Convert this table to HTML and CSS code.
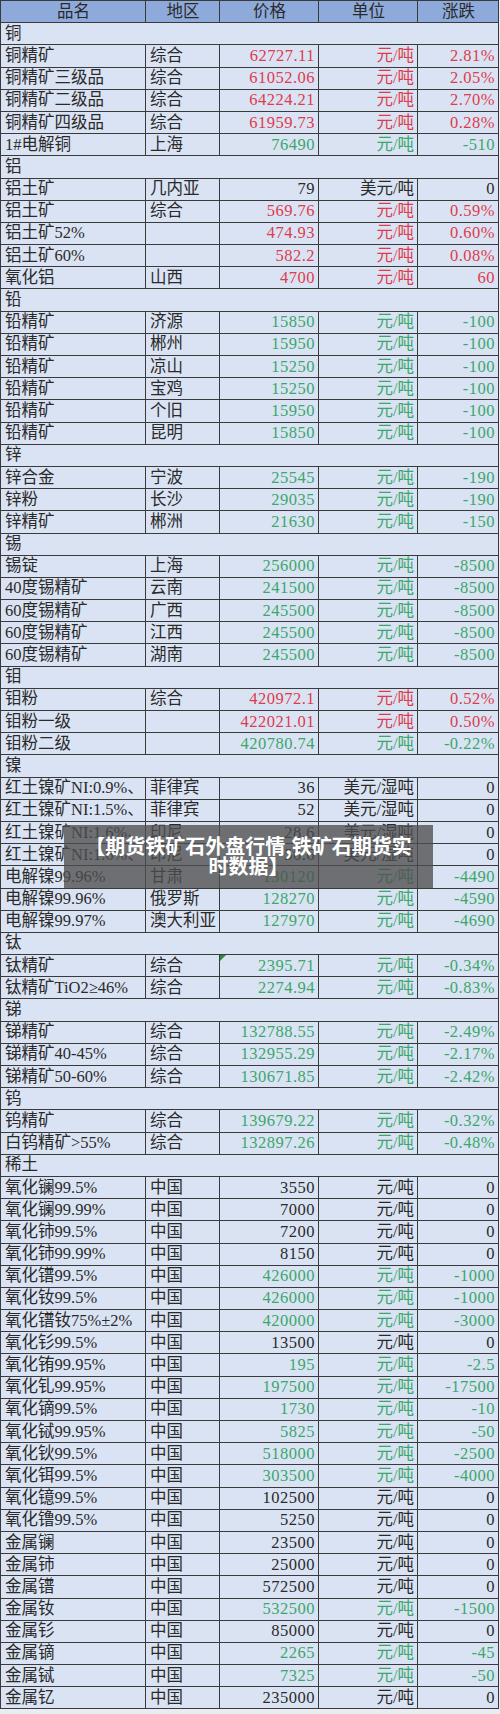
FILE: index.html
```html
<!DOCTYPE html>
<html lang="zh">
<head>
<meta charset="utf-8">
<title>期货铁矿石外盘行情</title>
<link rel="stylesheet" href="styles.css">
</head>
<body>
<div class="wrap">
<table class="sheet">
<colgroup><col class="c1"><col class="c2"><col class="c3"><col class="c4"><col class="c5"></colgroup>
<thead>
<tr><th>品名</th><th>地区</th><th>价格</th><th>单位</th><th>涨跌</th></tr>
</thead>
<tbody>
<tr class="sec"><td colspan="5">铜</td></tr>
<tr class="r"><td>铜精矿</td><td>综合</td><td>62727.11</td><td>元/吨</td><td>2.81%</td></tr>
<tr class="r"><td>铜精矿三级品</td><td>综合</td><td>61052.06</td><td>元/吨</td><td>2.05%</td></tr>
<tr class="r"><td>铜精矿二级品</td><td>综合</td><td>64224.21</td><td>元/吨</td><td>2.70%</td></tr>
<tr class="r"><td>铜精矿四级品</td><td>综合</td><td>61959.73</td><td>元/吨</td><td>0.28%</td></tr>
<tr class="g"><td>1#电解铜</td><td>上海</td><td>76490</td><td>元/吨</td><td>-510</td></tr>
<tr class="sec"><td colspan="5">铝</td></tr>
<tr><td>铝土矿</td><td>几内亚</td><td>79</td><td>美元/吨</td><td>0</td></tr>
<tr class="r"><td>铝土矿</td><td>综合</td><td>569.76</td><td>元/吨</td><td>0.59%</td></tr>
<tr class="r"><td>铝土矿52%</td><td></td><td>474.93</td><td>元/吨</td><td>0.60%</td></tr>
<tr class="r"><td>铝土矿60%</td><td></td><td>582.2</td><td>元/吨</td><td>0.08%</td></tr>
<tr class="r"><td>氧化铝</td><td>山西</td><td>4700</td><td>元/吨</td><td>60</td></tr>
<tr class="sec"><td colspan="5">铅</td></tr>
<tr class="g"><td>铅精矿</td><td>济源</td><td>15850</td><td>元/吨</td><td>-100</td></tr>
<tr class="g"><td>铅精矿</td><td>郴州</td><td>15950</td><td>元/吨</td><td>-100</td></tr>
<tr class="g"><td>铅精矿</td><td>凉山</td><td>15250</td><td>元/吨</td><td>-100</td></tr>
<tr class="g"><td>铅精矿</td><td>宝鸡</td><td>15250</td><td>元/吨</td><td>-100</td></tr>
<tr class="g"><td>铅精矿</td><td>个旧</td><td>15950</td><td>元/吨</td><td>-100</td></tr>
<tr class="g"><td>铅精矿</td><td>昆明</td><td>15850</td><td>元/吨</td><td>-100</td></tr>
<tr class="sec"><td colspan="5">锌</td></tr>
<tr class="g"><td>锌合金</td><td>宁波</td><td>25545</td><td>元/吨</td><td>-190</td></tr>
<tr class="g"><td>锌粉</td><td>长沙</td><td>29035</td><td>元/吨</td><td>-190</td></tr>
<tr class="g"><td>锌精矿</td><td>郴洲</td><td>21630</td><td>元/吨</td><td>-150</td></tr>
<tr class="sec"><td colspan="5">锡</td></tr>
<tr class="g"><td>锡锭</td><td>上海</td><td>256000</td><td>元/吨</td><td>-8500</td></tr>
<tr class="g"><td>40度锡精矿</td><td>云南</td><td>241500</td><td>元/吨</td><td>-8500</td></tr>
<tr class="g"><td>60度锡精矿</td><td>广西</td><td>245500</td><td>元/吨</td><td>-8500</td></tr>
<tr class="g"><td>60度锡精矿</td><td>江西</td><td>245500</td><td>元/吨</td><td>-8500</td></tr>
<tr class="g"><td>60度锡精矿</td><td>湖南</td><td>245500</td><td>元/吨</td><td>-8500</td></tr>
<tr class="sec"><td colspan="5">钼</td></tr>
<tr class="r"><td>钼粉</td><td>综合</td><td>420972.1</td><td>元/吨</td><td>0.52%</td></tr>
<tr class="r"><td>钼粉一级</td><td></td><td>422021.01</td><td>元/吨</td><td>0.50%</td></tr>
<tr class="g"><td>钼粉二级</td><td></td><td>420780.74</td><td>元/吨</td><td>-0.22%</td></tr>
<tr class="sec"><td colspan="5">镍</td></tr>
<tr><td>红土镍矿NI:0.9%、</td><td>菲律宾</td><td>36</td><td>美元/湿吨</td><td>0</td></tr>
<tr><td>红土镍矿NI:1.5%、</td><td>菲律宾</td><td>52</td><td>美元/湿吨</td><td>0</td></tr>
<tr><td>红土镍矿NI:1.6%、</td><td>印尼</td><td>28.6</td><td>美元/湿吨</td><td>0</td></tr>
<tr><td>红土镍矿NI:1.6%、</td><td>印尼</td><td>50.6</td><td>美元/湿吨</td><td>0</td></tr>
<tr class="g"><td>电解镍99.96%</td><td>甘肃</td><td>130120</td><td>元/吨</td><td>-4490</td></tr>
<tr class="g"><td>电解镍99.96%</td><td>俄罗斯</td><td>128270</td><td>元/吨</td><td>-4590</td></tr>
<tr class="g"><td>电解镍99.97%</td><td>澳大利亚</td><td>127970</td><td>元/吨</td><td>-4690</td></tr>
<tr class="sec"><td colspan="5">钛</td></tr>
<tr class="g"><td>钛精矿</td><td>综合</td><td class="note">2395.71</td><td>元/吨</td><td>-0.34%</td></tr>
<tr class="g"><td>钛精矿TiO2≥46%</td><td>综合</td><td>2274.94</td><td>元/吨</td><td>-0.83%</td></tr>
<tr class="sec"><td colspan="5">锑</td></tr>
<tr class="g"><td>锑精矿</td><td>综合</td><td>132788.55</td><td>元/吨</td><td>-2.49%</td></tr>
<tr class="g"><td>锑精矿40-45%</td><td>综合</td><td>132955.29</td><td>元/吨</td><td>-2.17%</td></tr>
<tr class="g"><td>锑精矿50-60%</td><td>综合</td><td>130671.85</td><td>元/吨</td><td>-2.42%</td></tr>
<tr class="sec"><td colspan="5">钨</td></tr>
<tr class="g"><td>钨精矿</td><td>综合</td><td>139679.22</td><td>元/吨</td><td>-0.32%</td></tr>
<tr class="g"><td>白钨精矿&gt;55%</td><td>综合</td><td>132897.26</td><td>元/吨</td><td>-0.48%</td></tr>
<tr class="sec"><td colspan="5">稀土</td></tr>
<tr><td>氧化镧99.5%</td><td>中国</td><td>3550</td><td>元/吨</td><td>0</td></tr>
<tr><td>氧化镧99.99%</td><td>中国</td><td>7000</td><td>元/吨</td><td>0</td></tr>
<tr><td>氧化铈99.5%</td><td>中国</td><td>7200</td><td>元/吨</td><td>0</td></tr>
<tr><td>氧化铈99.99%</td><td>中国</td><td>8150</td><td>元/吨</td><td>0</td></tr>
<tr class="g"><td>氧化镨99.5%</td><td>中国</td><td>426000</td><td>元/吨</td><td>-1000</td></tr>
<tr class="g"><td>氧化钕99.5%</td><td>中国</td><td>426000</td><td>元/吨</td><td>-1000</td></tr>
<tr class="g"><td>氧化镨钕75%±2%</td><td>中国</td><td>420000</td><td>元/吨</td><td>-3000</td></tr>
<tr><td>氧化钐99.5%</td><td>中国</td><td>13500</td><td>元/吨</td><td>0</td></tr>
<tr class="g"><td>氧化铕99.95%</td><td>中国</td><td>195</td><td>元/吨</td><td>-2.5</td></tr>
<tr class="g"><td>氧化钆99.95%</td><td>中国</td><td>197500</td><td>元/吨</td><td>-17500</td></tr>
<tr class="g"><td>氧化镝99.5%</td><td>中国</td><td>1730</td><td>元/吨</td><td>-10</td></tr>
<tr class="g"><td>氧化铽99.95%</td><td>中国</td><td>5825</td><td>元/吨</td><td>-50</td></tr>
<tr class="g"><td>氧化钬99.5%</td><td>中国</td><td>518000</td><td>元/吨</td><td>-2500</td></tr>
<tr class="g"><td>氧化铒99.5%</td><td>中国</td><td>303500</td><td>元/吨</td><td>-4000</td></tr>
<tr><td>氧化镱99.5%</td><td>中国</td><td>102500</td><td>元/吨</td><td>0</td></tr>
<tr><td>氧化镥99.5%</td><td>中国</td><td>5250</td><td>元/吨</td><td>0</td></tr>
<tr><td>金属镧</td><td>中国</td><td>23500</td><td>元/吨</td><td>0</td></tr>
<tr><td>金属铈</td><td>中国</td><td>25000</td><td>元/吨</td><td>0</td></tr>
<tr><td>金属镨</td><td>中国</td><td>572500</td><td>元/吨</td><td>0</td></tr>
<tr class="g"><td>金属钕</td><td>中国</td><td>532500</td><td>元/吨</td><td>-1500</td></tr>
<tr><td>金属钐</td><td>中国</td><td>85000</td><td>元/吨</td><td>0</td></tr>
<tr class="g"><td>金属镝</td><td>中国</td><td>2265</td><td>元/吨</td><td>-45</td></tr>
<tr class="g"><td>金属铽</td><td>中国</td><td>7325</td><td>元/吨</td><td>-50</td></tr>
<tr><td>金属钇</td><td>中国</td><td>235000</td><td>元/吨</td><td>0</td></tr>
</tbody>
</table>
<div class="caption">【期货铁矿石外盘行情,铁矿石期货实<br>时数据】</div>
</div>
</body>
</html>
```
FILE: styles.css
```css
html, body {
  margin: 0;
  padding: 0;
  background: #e9edf3;
}
.wrap {
  position: relative;
  width: 500px;
}
.sheet {
  width: 498px;
  border-collapse: collapse;
  table-layout: fixed;
  font-family: "Liberation Serif", "Noto Sans CJK SC", serif;
  font-size: 16.5px;
  color: #2a2a2a;
  background: #dae3f3;
}
.c1 { width: 145px; }
.c2 { width: 74px; }
.c3 { width: 99px; }
.c4 { width: 99px; }
.c5 { width: 81px; }
.sheet th, .sheet td {
  height: 21.2px;
  padding: 0 3px 0 4px;
  border: 1px solid #3a3a3a;
  white-space: nowrap;
  overflow: hidden;
  line-height: 20px;
}
.sheet th {
  background: #8eaadb;
  font-weight: normal;
  text-align: center;
  color: #2a2a2a;
}
.sheet td:nth-child(3),
.sheet td:nth-child(4),
.sheet td:nth-child(5) {
  text-align: right;
}
.sheet td:nth-child(3),
.sheet td:nth-child(5) {
  letter-spacing: 0.5px;
}
.sheet td:nth-child(4),
.sheet td:nth-child(5) {
  border-left-color: #8a8a8a;
}
.sheet .sec td {
  text-align: left;
}
.r td:nth-child(n+3) { color: #de3b4c; }
.g td:nth-child(n+3) { color: #3aa76b; }
.note {
  position: relative;
}
.note::before {
  content: "";
  position: absolute;
  left: 0;
  top: 0;
  border-top: 6px solid #2f8a3e;
  border-right: 6px solid transparent;
}
.caption {
  position: absolute;
  left: 64px;
  top: 825px;
  width: 369px;
  height: 63px;
  box-sizing: border-box;
  padding-top: 11px;
  background: rgba(78, 78, 78, 0.78);
  color: #ffffff;
  font-family: "Noto Sans CJK SC", sans-serif;
  font-weight: bold;
  font-size: 20px;
  line-height: 20px;
  text-align: center;
}
```
